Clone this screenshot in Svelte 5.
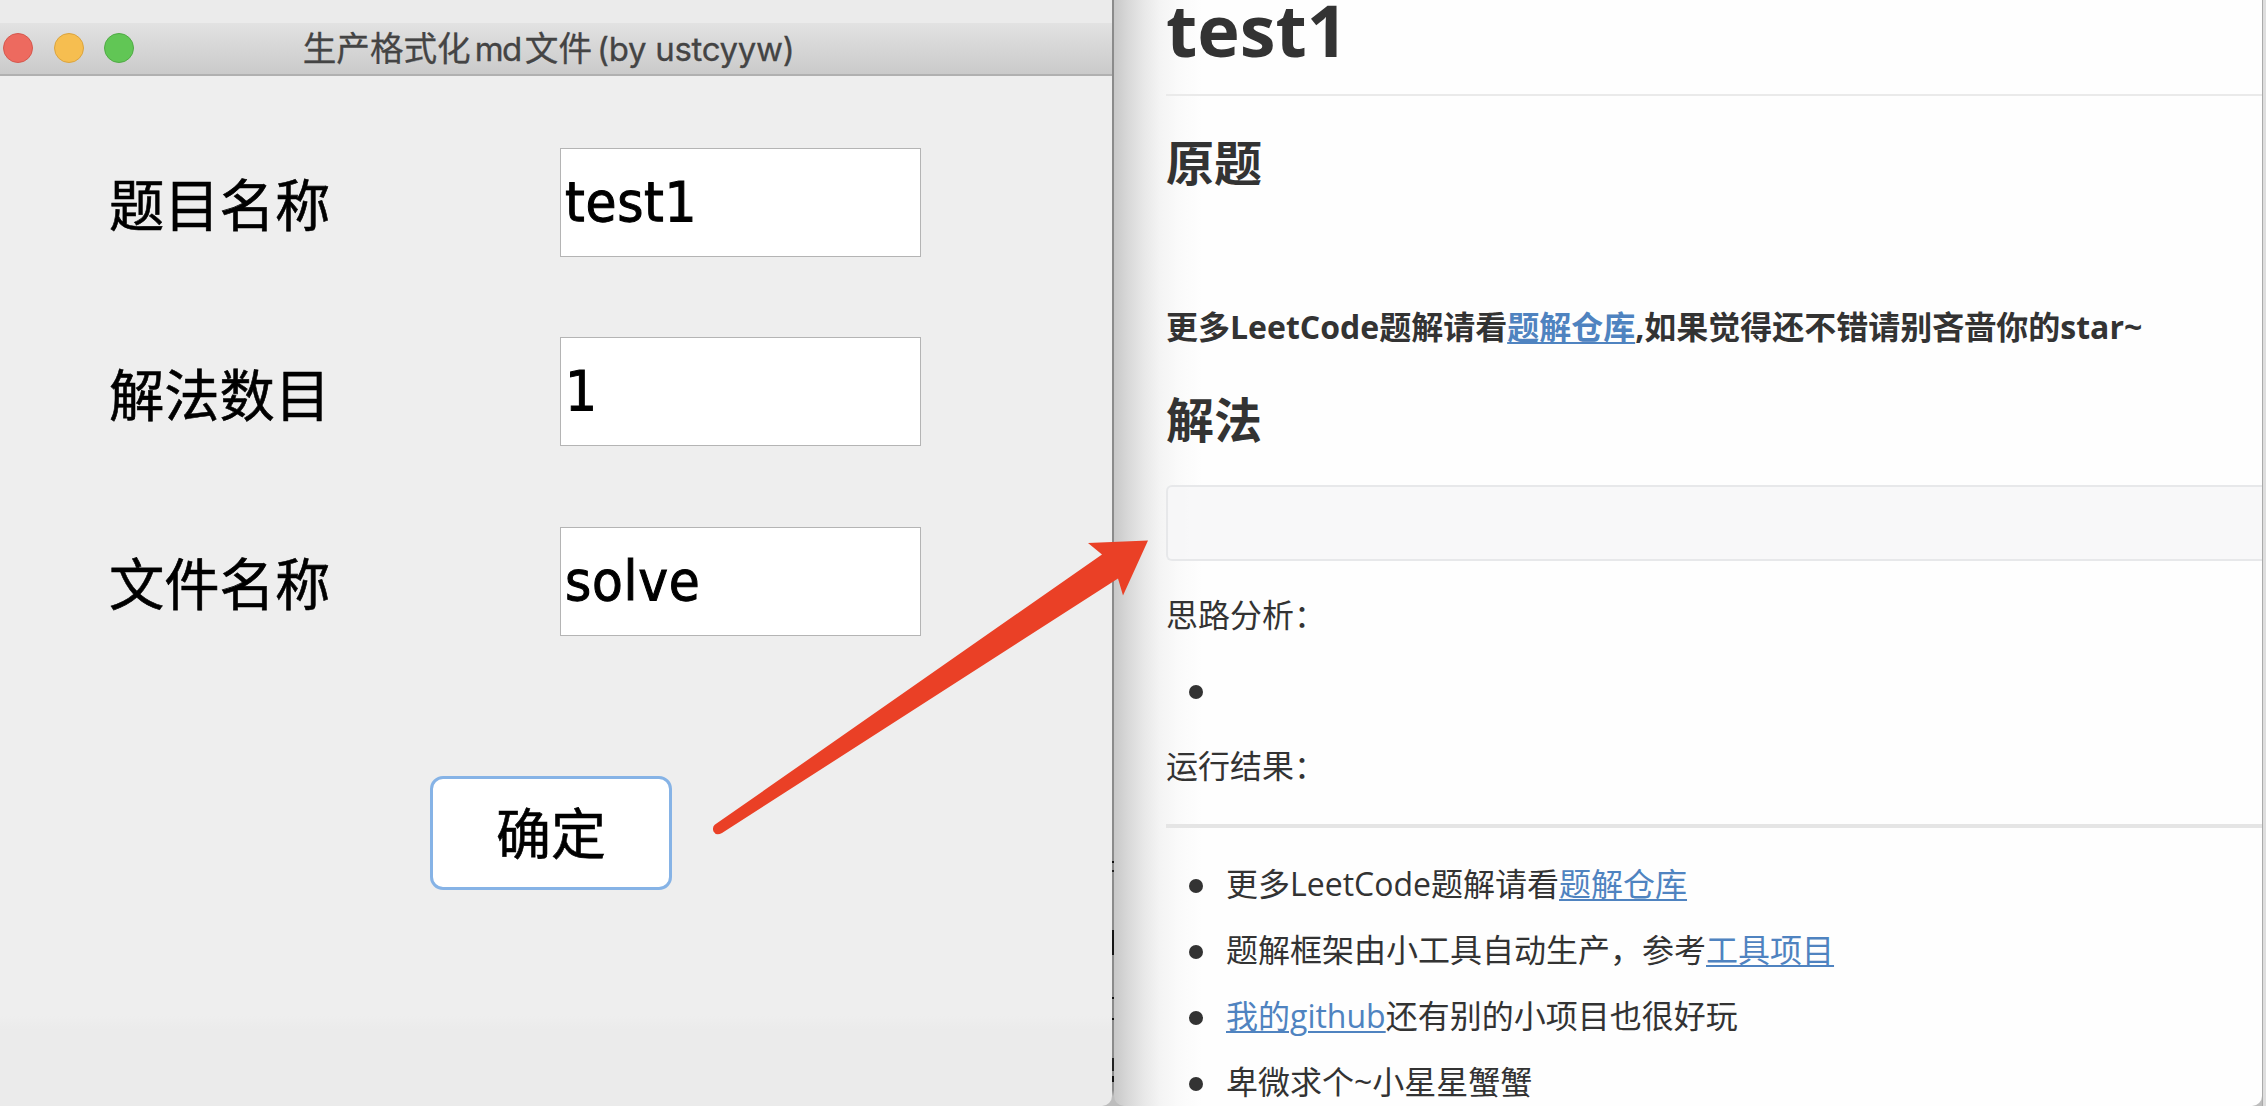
<script>
  const fields = [
    { label: '题目名称', value: 'test1' },
    { label: '解法数目', value: '1' },
    { label: '文件名称', value: 'solve' }
  ];
</script>

<div class="desktop">
  <section class="dialog">
    <header class="titlebar">
      <span class="light red"></span>
      <span class="light yellow"></span>
      <span class="light green"></span>
      <h2 class="title">生产格式化<span class="md">md</span>文件<span class="by">(by ustcyyw)</span></h2>
    </header>
    <form class="form">
      {#each fields as field}
        <div class="row">
          <span class="label">{field.label}</span>
          <div class="input"><span>{field.value}</span></div>
        </div>
      {/each}
      <button class="confirm" type="button">确定</button>
    </form>
  </section>

  <div class="divider"></div>

  <article class="doc">
    <h1>test1</h1>
    <h3 class="original">原题</h3>
    <p class="notice">更多LeetCode题解请看<a href="#repo">题解仓库</a>,如果觉得还不错请别吝啬你的star~</p>
    <h3 class="solution">解法</h3>
    <div class="code"></div>
    <p class="analysis">思路分析：</p>
    <ul class="empty"><li></li></ul>
    <p class="result">运行结果：</p>
    <hr />
    <ul class="links">
      <li>更多LeetCode题解请看<a href="#repo">题解仓库</a></li>
      <li>题解框架由小工具自动生产，参考<a href="#tool">工具项目</a></li>
      <li><a href="#github">我的github</a>还有别的小项目也很好玩</li>
      <li>卑微求个~小星星蟹蟹</li>
    </ul>
  </article>

  <div class="edge"></div>

  <svg class="arrow" viewBox="0 0 450 310" width="450" height="310" aria-hidden="true">
    <path d="M14.7 294.8 L402 24.5 L388 13 L448 10.5 L423 65.5 L418 48.5 L22 303 Q16 306 13.5 301.500 Q12 297.500 14.7 294.8 Z" fill="#ea4026" />
  </svg>
</div>

<style>
  :global(body) {
    margin: 0;
    overflow: hidden;
  }
  .desktop {
    position: relative;
    display: flex;
    width: 2266px;
    height: 1106px;
    overflow: hidden;
    background: #bdbdbd;
    font-family: 'Open Sans', 'Noto Sans CJK SC', sans-serif;
  }
  .dialog {
    box-sizing: border-box;
    width: 1112px;
    height: 1106px;
    padding-top: 23px;
    background: linear-gradient(#ebebeb 0, #ebebeb 60px, #eee 76px, #eee 1016px, #ebebeb 1030px);
    border-bottom-right-radius: 10px;
  }
  .titlebar {
    box-sizing: border-box;
    display: flex;
    align-items: center;
    height: 53px;
    padding: 0 0 2px 3px;
    background: linear-gradient(#e2e2e2, #cacaca);
    border-bottom: 2px solid #b0b0b0;
  }
  .light {
    box-sizing: border-box;
    flex: none;
    width: 30px;
    height: 30px;
    margin-right: 20.6px;
    border-radius: 50%;
  }
  .red { background: #ed6a5f; border: 1px solid #d5584e; }
  .yellow { background: #f6be50; border: 1px solid #dba43e; }
  .green { background: #61c655; border: 1px solid #50ab45; }
  .title {
    margin: 3px 0 0 148px;
    font: 400 33.6px/50px Inter, 'Noto Sans CJK SC', sans-serif;
    color: #444;
    -webkit-text-stroke: 0.3px #444;
    white-space: nowrap;
  }
  .md { margin: 0 4px 0 4px; font-size: 33px; letter-spacing: -1.5px; }
  .by { margin-left: 5px; font-size: 33px; letter-spacing: -0.3px; }
  .form {
    display: flex;
    flex-direction: column;
    padding-top: 71.5px;
  }
  .row {
    display: flex;
    align-items: center;
    height: 109px;
    margin-bottom: 80.5px;
  }
  .label {
    width: 451px;
    padding-left: 109px;
    font: 400 55.3px/80px 'Noto Sans CJK SC', sans-serif;
    color: #000;
    -webkit-text-stroke: 0.6px #000;
  }
  .input {
    box-sizing: border-box;
    width: 361px;
    height: 109px;
    padding: 0 4px;
    border: 1px solid #b4b4b4;
    background: #fff;
    font: 400 56px/106px 'DejaVu Sans Condensed', 'DejaVu Sans', sans-serif;
    font-stretch: condensed;
    letter-spacing: 0.7px;
    color: #000;
    -webkit-text-stroke: 1px #000;
  }
  .confirm {
    box-sizing: border-box;
    width: 242px;
    height: 114px;
    margin: 59.5px 0 0 430px;
    padding: 0 0 5px;
    border: 3px solid #86b3e6;
    border-radius: 13px;
    background: #fff;
    font: 400 55px/80px 'Noto Sans CJK SC', sans-serif;
    color: #000;
    -webkit-text-stroke: 0.6px #000;
  }
  .divider {
    width: 2px;
    height: 1096px;
    background: linear-gradient(
      #8b8b8b 861px, #111 861px, #111 863px, #8b8b8b 863px, #8b8b8b 870px, #222 870px, #222 872px,
      #8b8b8b 872px, #8b8b8b 930px, #151515 930px, #151515 955px, #8b8b8b 955px, #8b8b8b 997px,
      #111 997px, #111 999px, #8b8b8b 999px, #8b8b8b 1018px, #111 1018px, #111 1020px,
      #8b8b8b 1020px, #8b8b8b 1058px, #222 1058px, #222 1071px, #8b8b8b 1071px, #8b8b8b 1076px,
      #111 1076px, #111 1082px, #8b8b8b 1082px, #8b8b8b 1090px, #bbb
    );
  }
  .doc {
    box-sizing: border-box;
    width: 1148px;
    height: 1106px;
    padding-left: 52px;
    border-radius: 0 0 10px 10px;
    background: linear-gradient(to right, #c8c8c8 0, #d8d8d8 14px, #e8e8e8 30px, #f4f4f4 46px, #fafafa 64px, #fefefe 88px, #fefefe);
    color: #333;
    font-size: 32px;
    line-height: 50px;
    white-space: nowrap;
  }
  h1, h3, p, ul, hr { margin: 0; padding: 0; }
  h1 {
    box-sizing: border-box;
    height: 96px;
    border-bottom: 2px solid #eaeaea;
    font-size: 72px;
    line-height: 58px;
    font-weight: 700;
  }
  h3 {
    font-size: 48px;
    line-height: 70px;
    font-weight: 600;
  }
  .original { padding-top: 32px; }
  .notice { padding-top: 104px; font-weight: 700; }
  .solution { padding-top: 33px; }
  .code {
    box-sizing: border-box;
    height: 76px;
    margin-top: 30px;
    border: 2px solid #e7e8ea;
    border-right: 0;
    border-radius: 6px 0 0 6px;
    background: rgb(246 246 247 / 0.8);
  }
  .analysis { padding-top: 29px; }
  .result { padding-top: 26px; }
  hr {
    height: 4px;
    margin-top: 33px;
    border: 0;
    background: #e5e5e5;
  }
  ul { list-style: none; }
  li {
    display: flex;
    align-items: center;
    height: 50px;
    margin-bottom: 16px;
  }
  li::before {
    content: '';
    flex: none;
    width: 14px;
    height: 14px;
    margin: 4px 23px 0 23px;
    border-radius: 50%;
    background: #333;
  }
  .empty { padding-top: 25px; }
  .empty li { margin-bottom: 0; }
  .links { padding-top: 31px; }
  a {
    color: #4f83c0;
    text-decoration: underline;
    text-decoration-thickness: 2px;
    text-underline-offset: 3px;
  }
  .edge {
    box-sizing: border-box;
    width: 4px;
    border-left: 1px solid #aaa;
    background: #dedede;
  }
  .arrow {
    position: absolute;
    left: 700px;
    top: 530px;
  }
</style>
